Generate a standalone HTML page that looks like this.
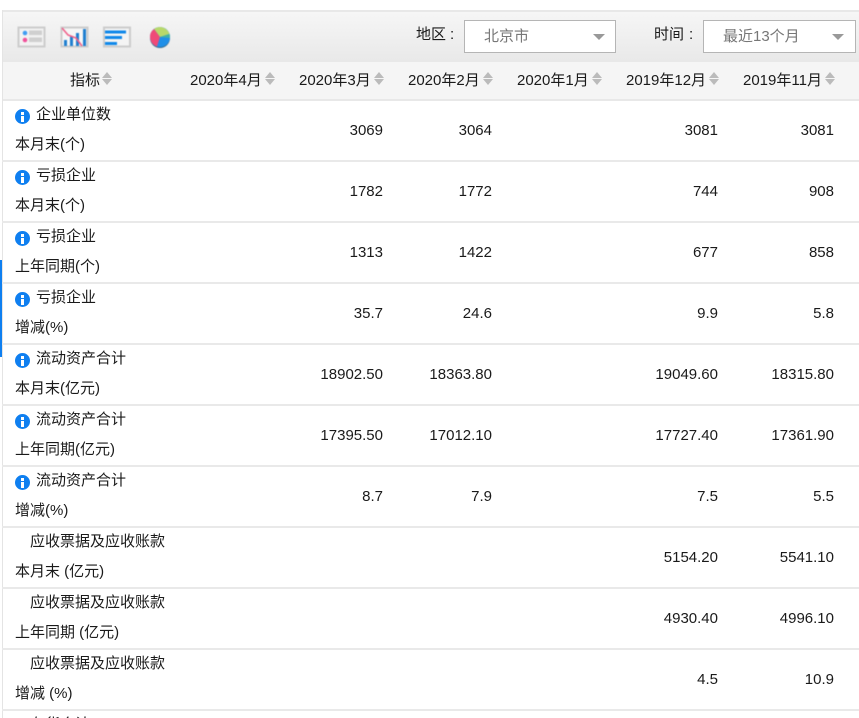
<!DOCTYPE html>
<html><head><meta charset="utf-8">
<style>
html{margin:0;padding:0;width:859px;height:718px;overflow:hidden;background:#fff;}
body{margin:0;padding:0;background:#fff;width:859px;height:718px;overflow:hidden;position:relative;font-family:"Liberation Sans","WenQuanYi Zen Hei",sans-serif;font-size:15px;color:#1a1a1a;}
#w{position:absolute;left:0;top:0;width:859px;height:718px;overflow:hidden;}
.a{position:absolute;white-space:nowrap;line-height:20px;}
.tb{position:absolute;left:2px;top:10px;width:857px;height:50px;background:linear-gradient(#f6f6f6,#e9e9e9);border-top:2px solid #e8e8e8;box-sizing:border-box;}
.hd{position:absolute;left:2px;top:60px;width:857px;height:41px;background:#f5f5f5;border-top:2px solid #e8e8e8;border-bottom:2px solid #e8e8e8;box-sizing:border-box;}
.lb{position:absolute;left:2px;top:10px;width:1px;height:708px;background:#e4e4e4;}
.bb{position:absolute;left:0;top:260px;width:2px;height:97px;background:#0f7ff0;}
.ln{position:absolute;left:2px;width:857px;height:2px;background:#e9e9e9;}
.sel{position:absolute;top:20px;height:33px;background:#fff;border:1px solid #b5b5b5;box-sizing:border-box;color:#777;line-height:31px;font-size:15px;}
.tri{position:absolute;width:0;height:0;border-left:6px solid transparent;border-right:6px solid transparent;border-top:6px solid #999;}
.s{position:absolute;width:0;height:0;border-left:5px solid transparent;border-right:5px solid transparent;}
.u{border-bottom:6px solid #bbb;top:72px;}
.d{border-top:6px solid #bbb;top:79px;}
.n{position:absolute;white-space:nowrap;line-height:20px;text-align:right;}
.i{position:absolute;left:15px;width:15px;height:15px;border-radius:50%;background:#0f7ff0;}
.i::before{content:"";position:absolute;left:6px;top:3px;width:3px;height:2.5px;background:#fff;}
.i::after{content:"";position:absolute;left:6px;top:6.5px;width:3px;height:6px;background:#fff;}
</style></head><body><div id="w">
<div class="tb"></div>
<div class="hd"></div>
<div class="lb"></div>
<div class="bb"></div>

<svg class="a" style="left:17px;top:26px;filter:blur(.4px)" width="158" height="25" viewBox="0 0 158 25">
<rect x="1.5" y="1.5" width="26" height="19" fill="#f2f2f2" stroke="#cccccc" stroke-width="2"/>
<circle cx="8" cy="7" r="2.3" fill="#3f9df2"/><circle cx="8" cy="14" r="2.3" fill="#f0529a"/>
<rect x="12" y="4.500" width="13" height="4.500" fill="#cfcfcf"/><rect x="12" y="11.500" width="13" height="4.500" fill="#cfcfcf"/>
<rect x="44.500" y="1.5" width="26" height="19" fill="#f6f6f6" stroke="#cccccc" stroke-width="2"/>
<rect x="47" y="14" width="3" height="6" fill="#1f7fd0"/><rect x="53" y="10" width="3" height="10" fill="#1f7fd0"/><rect x="59" y="7" width="3" height="13" fill="#1f7fd0"/><rect x="66" y="3" width="3" height="17" fill="#1f7fd0"/>
<path d="M45 2 L51 9 L59 12 L65 20" fill="none" stroke="#f0608a" stroke-width="1.6"/>
<rect x="87" y="1.5" width="26" height="19" fill="#f4f4f4" stroke="#cccccc" stroke-width="2"/>
<rect x="88" y="4.500" width="21" height="3" fill="#0f88ea"/><rect x="88" y="10" width="17" height="3" fill="#0f88ea"/><rect x="88" y="16" width="12" height="3" fill="#0f88ea"/>
<circle cx="143" cy="12" r="10" fill="#356a8c"/>
<circle cx="143" cy="11" r="10" fill="#1f8fe8"/>
<path d="M143 11 L137 3 A10 10 0 0 1 152.500 8 Z" fill="#b8d86a"/>
<path d="M143 11 L137 3 A10 10 0 0 0 140 20.500 Z" fill="#ef4a78"/>
<path d="M143 11 L152.500 8 A10 10 0 0 1 153 12 Z" fill="#3fb1a8"/>
</svg>

<div class="a" style="left:416px;top:25px">地区</div><div class="a" style="left:450px;top:25px">:</div>
<div class="sel" style="left:464px;width:152px;padding-left:19px">北京市<div class="tri" style="right:10px;top:13px"></div></div>
<div class="a" style="left:654px;top:25px">时间</div><div class="a" style="left:689px;top:25px">:</div>
<div class="sel" style="left:703px;width:153px;padding-left:19px">最近13个月<div class="tri" style="right:11px;top:13px"></div></div>

<div class="a" style="left:70px;top:71px">指标</div><div class="s u" style="left:102px"></div><div class="s d" style="left:102px"></div>
<div class="a" style="left:190px;top:71px">2020年4月</div><div class="s u" style="left:265px"></div><div class="s d" style="left:265px"></div>
<div class="a" style="left:299px;top:71px">2020年3月</div><div class="s u" style="left:374px"></div><div class="s d" style="left:374px"></div>
<div class="a" style="left:408px;top:71px">2020年2月</div><div class="s u" style="left:483px"></div><div class="s d" style="left:483px"></div>
<div class="a" style="left:517px;top:71px">2020年1月</div><div class="s u" style="left:592px"></div><div class="s d" style="left:592px"></div>
<div class="a" style="left:626px;top:71px">2019年12月</div><div class="s u" style="left:709px"></div><div class="s d" style="left:709px"></div>
<div class="a" style="left:743px;top:71px">2019年11月</div><div class="s u" style="left:825px"></div><div class="s d" style="left:825px"></div>

<div class="ln" style="top:160px"></div><div class="ln" style="top:221px"></div><div class="ln" style="top:282px"></div><div class="ln" style="top:343px"></div><div class="ln" style="top:404px"></div><div class="ln" style="top:465px"></div><div class="ln" style="top:526px"></div><div class="ln" style="top:587px"></div><div class="ln" style="top:648px"></div><div class="ln" style="top:709px"></div>

<div class="i" style="top:109px"></div><div class="a" style="left:36px;top:105px">企业单位数</div><div class="a" style="left:15px;top:135px">本月末(个)</div>
<div class="n" style="right:476px;top:121px">3069</div><div class="n" style="right:367px;top:121px">3064</div><div class="n" style="right:141px;top:121px">3081</div><div class="n" style="right:25px;top:121px">3081</div>

<div class="i" style="top:170px"></div><div class="a" style="left:36px;top:166px">亏损企业</div><div class="a" style="left:15px;top:196px">本月末(个)</div>
<div class="n" style="right:476px;top:182px">1782</div><div class="n" style="right:367px;top:182px">1772</div><div class="n" style="right:141px;top:182px">744</div><div class="n" style="right:25px;top:182px">908</div>

<div class="i" style="top:231px"></div><div class="a" style="left:36px;top:227px">亏损企业</div><div class="a" style="left:15px;top:257px">上年同期(个)</div>
<div class="n" style="right:476px;top:243px">1313</div><div class="n" style="right:367px;top:243px">1422</div><div class="n" style="right:141px;top:243px">677</div><div class="n" style="right:25px;top:243px">858</div>

<div class="i" style="top:292px"></div><div class="a" style="left:36px;top:288px">亏损企业</div><div class="a" style="left:15px;top:318px">增减(%)</div>
<div class="n" style="right:476px;top:304px">35.7</div><div class="n" style="right:367px;top:304px">24.6</div><div class="n" style="right:141px;top:304px">9.9</div><div class="n" style="right:25px;top:304px">5.8</div>

<div class="i" style="top:353px"></div><div class="a" style="left:36px;top:349px">流动资产合计</div><div class="a" style="left:15px;top:379px">本月末(亿元)</div>
<div class="n" style="right:476px;top:365px">18902.50</div><div class="n" style="right:367px;top:365px">18363.80</div><div class="n" style="right:141px;top:365px">19049.60</div><div class="n" style="right:25px;top:365px">18315.80</div>

<div class="i" style="top:414px"></div><div class="a" style="left:36px;top:410px">流动资产合计</div><div class="a" style="left:15px;top:440px">上年同期(亿元)</div>
<div class="n" style="right:476px;top:426px">17395.50</div><div class="n" style="right:367px;top:426px">17012.10</div><div class="n" style="right:141px;top:426px">17727.40</div><div class="n" style="right:25px;top:426px">17361.90</div>

<div class="i" style="top:475px"></div><div class="a" style="left:36px;top:471px">流动资产合计</div><div class="a" style="left:15px;top:501px">增减(%)</div>
<div class="n" style="right:476px;top:487px">8.7</div><div class="n" style="right:367px;top:487px">7.9</div><div class="n" style="right:141px;top:487px">7.5</div><div class="n" style="right:25px;top:487px">5.5</div>

<div class="a" style="left:30px;top:532px">应收票据及应收账款</div><div class="a" style="left:15px;top:562px">本月末 (亿元)</div>
<div class="n" style="right:141px;top:548px">5154.20</div><div class="n" style="right:25px;top:548px">5541.10</div>

<div class="a" style="left:30px;top:593px">应收票据及应收账款</div><div class="a" style="left:15px;top:623px">上年同期 (亿元)</div>
<div class="n" style="right:141px;top:609px">4930.40</div><div class="n" style="right:25px;top:609px">4996.10</div>

<div class="a" style="left:30px;top:654px">应收票据及应收账款</div><div class="a" style="left:15px;top:684px">增减 (%)</div>
<div class="n" style="right:141px;top:670px">4.5</div><div class="n" style="right:25px;top:670px">10.9</div>

<div class="a" style="left:30px;top:715px">存货合计</div>
</div></body></html>
